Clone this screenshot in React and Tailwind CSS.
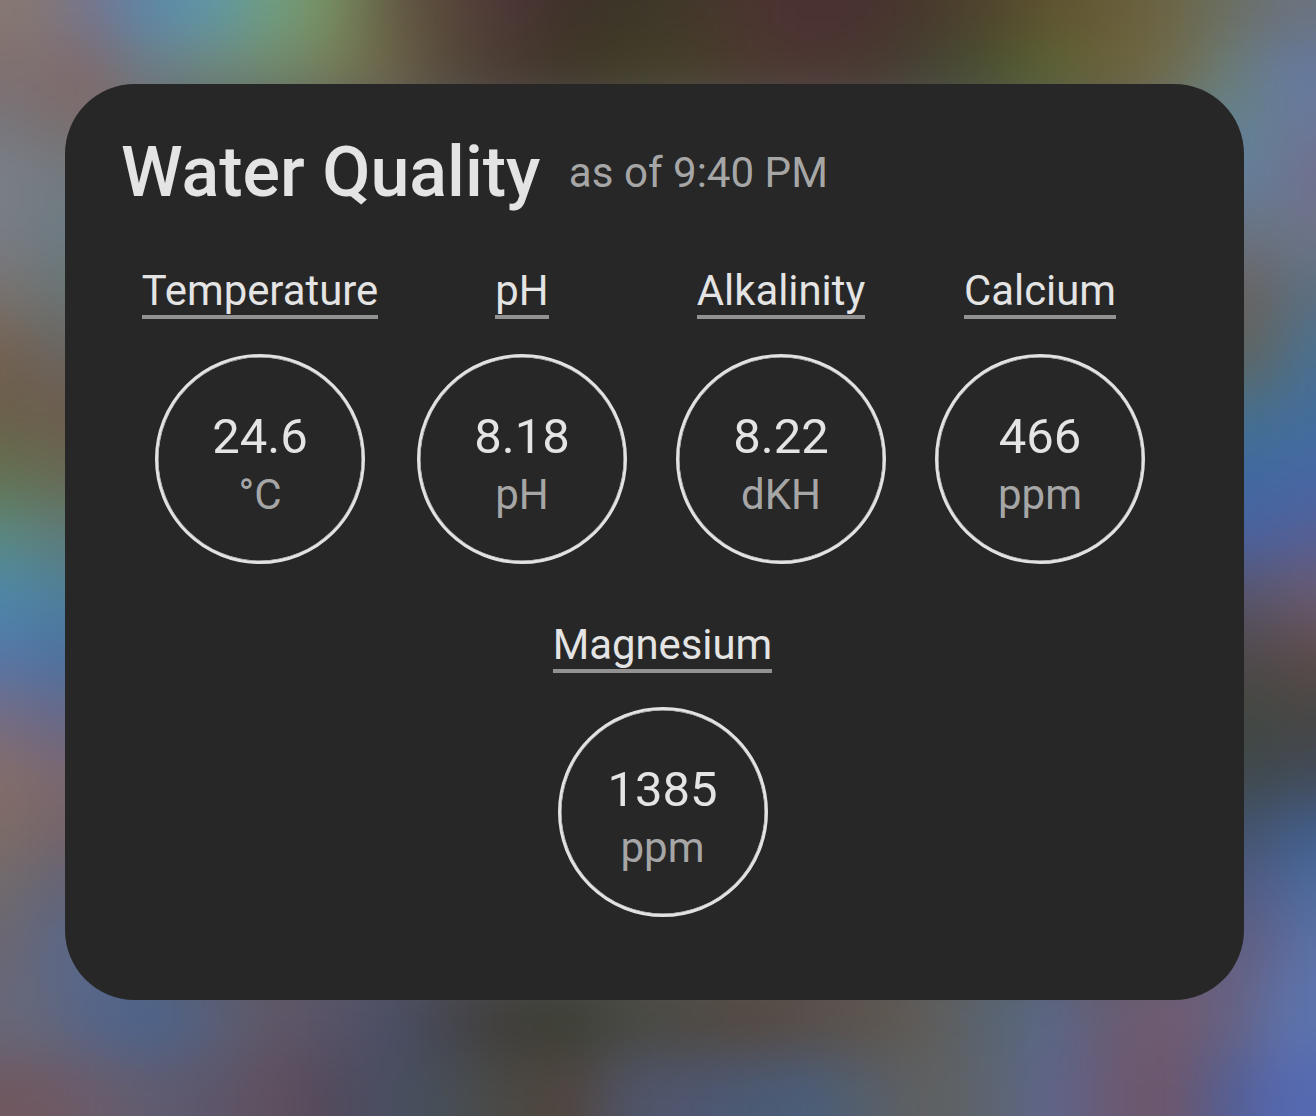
const topUpper = ["#867872", "#75758f", "#5d88aa", "#5f96a6", "#6f9f82", "#788f61", "#655e46", "#574539", "#4b3637", "#3f3229", "#3c3628", "#42382a", "#4b352f", "#4b3033", "#483230", "#483a2c", "#50452e", "#5e5330", "#675b38", "#6b6546", "#6b6f62", "#6b727d"]
const topLower = ["#7f6f70", "#80696b", "#6c7c84", "#6f877c", "#70886c", "#757d58", "#6d6448", "#54493a", "#483a2f", "#403727", "#423d26", "#47402a", "#4b392e", "#4c3831", "#48392f", "#444434", "#4a532f", "#5b6432", "#6b643a", "#716b4b", "#6a7d78", "#657aa0"]
const bottomUpper = ["#66687a", "#566588", "#4b648c", "#58607a", "#5f5767", "#585368", "#4b4f66", "#44444c", "#3f3d38", "#3b3f35", "#484840", "#4d4a42", "#554840", "#584e48", "#5d544c", "#5f5d5a", "#586470", "#5a6787", "#685c74", "#705b70", "#67617f", "#5c73ac"]
const bottomLower = ["#6f5860", "#6b5c6a", "#605c70", "#5c566b", "#60505f", "#53495c", "#484f62", "#474e55", "#4b4843", "#51453f", "#4f5468", "#4f5670", "#4b5a74", "#4a5d7a", "#565f6a", "#606060", "#5c6570", "#5e658b", "#6a5a74", "#6d566a", "#545f94", "#5569b2"]
const leftOuter = ["#75767c", "#7b7f88", "#797c85", "#7a716d", "#73604f", "#6b5f4a", "#63724f", "#5a8a82", "#4d88aa", "#5577a8", "#756c85", "#846d68", "#7c6c66", "#706a6d", "#6b6670"]
const leftInner = ["#7a6d6c", "#727a80", "#6c7b82", "#687474", "#6a6460", "#6c5d4e", "#676952", "#5e7c78", "#4e7f9a", "#4b72a0", "#66688a", "#7a6770", "#74646a", "#60647a", "#5a688a"]
const rightInner = ["#62828f", "#647f9c", "#697380", "#686360", "#5f6560", "#46708c", "#3f69a0", "#4a62a0", "#58556c", "#50494b", "#424741", "#40494b", "#435470", "#555d85", "#635e80"]
const rightOuter = ["#6c7898", "#706f8e", "#6d7488", "#5b6f80", "#4a7090", "#436d9c", "#4668a5", "#555f97", "#6a5a70", "#5c4c4b", "#484644", "#414a58", "#426090", "#4f6c9f", "#5c72a8"]

const rows = [
  { colors: topUpper, y: -100, height: 142 },
  { colors: topLower, y: 42, height: 60 },
  { colors: bottomUpper, y: 975, height: 80 },
  { colors: bottomLower, y: 1055, height: 161 },
]

const columns = [
  { colors: leftOuter, x: -100, width: 132 },
  { colors: leftInner, x: 32, width: 120 },
  { colors: rightInner, x: 1160, width: 120 },
  { colors: rightOuter, x: 1280, width: 136 },
]

const readings = [
  [
    { label: "Temperature", value: "24.6", unit: "°C", width: "w-[216px]" },
    { label: "pH", value: "8.18", unit: "pH", width: "w-[210px]" },
    { label: "Alkalinity", value: "8.22", unit: "dKH", width: "w-[210px]" },
    { label: "Calcium", value: "466", unit: "ppm", width: "w-[210px]" },
  ],
  [{ label: "Magnesium", value: "1385", unit: "ppm", width: "w-[210px]" }],
]

const Wallpaper = () => (
  <svg className="absolute inset-0" width="1316" height="1116" viewBox="0 0 1316 1116" aria-hidden="true">
    <defs>
      <filter id="soften" filterUnits="userSpaceOnUse" x="-100" y="-100" width="1516" height="1316" colorInterpolationFilters="sRGB">
        <feGaussianBlur stdDeviation="27" />
      </filter>
    </defs>
    <g filter="url(#soften)" shapeRendering="crispEdges">
      <rect x="-100" y="-100" width="1516" height="1316" fill="#5a5a60" />
      {columns.map(({ colors, x, width }) =>
        colors.map((color, i) => (
          <rect key={`${x}-${i}`} x={x} y={85 + i * 60} width={width} height="61" fill={color} />
        ))
      )}
      {rows.map(({ colors, y, height }) =>
        colors.map((color, i) => {
          const x = i === 0 ? -100 : i * 60
          const end = i === colors.length - 1 ? 1416 : (i + 1) * 60
          return <rect key={`${y}-${i}`} x={x} y={y} width={end - x} height={height} fill={color} />
        })
      )}
    </g>
  </svg>
)

const Reading = ({ reading }) => {
  const { label, value, unit, width } = reading

  return (
    <div className={`flex flex-col items-center ${width}`}>
      <h2 className="whitespace-nowrap border-b-4 border-[#929292] text-[41.85px] leading-[48px]">{label}</h2>
      <div className="mt-[34.5px] flex size-[210px] flex-col items-center rounded-full border-[3px] border-[#e2e2e2] pt-[52px] shadow-[inset_0_0_0_0.5px_#e2e2e2]">
        <span className="text-[49px] leading-[56px]">{value}</span>
        <span className="mt-0.5 text-[42px] leading-[56px] text-[#a6a6a6]">{unit}</span>
      </div>
    </div>
  )
}

const App = () => {
  return (
    <div className="relative h-[1116px] w-[1316px] overflow-hidden pl-[65px] pt-[84px] font-['Roboto',sans-serif] text-[#e4e4e4]">
      <Wallpaper />
      <main className="relative h-[916px] w-[1179px] rounded-[70px] bg-[#272727] pt-12">
        <header className="flex items-start pl-14">
          <h1 className="text-[70px] font-medium leading-[80px]">Water Quality</h1>
          <span className="ml-[28.5px] mt-[17px] text-[42.1px] leading-[48px] text-[#a6a6a6]">as of 9:40 PM</span>
        </header>
        <section className="mt-[55px] flex flex-col gap-[57px]">
          <div className="flex gap-[49px] pl-[87px]">
            {readings[0].map((reading) => <Reading key={reading.label} reading={reading} />)}
          </div>
          <div className="flex pl-[492.5px]">
            {readings[1].map((reading) => <Reading key={reading.label} reading={reading} />)}
          </div>
        </section>
      </main>
    </div>
  )
}

export default App
